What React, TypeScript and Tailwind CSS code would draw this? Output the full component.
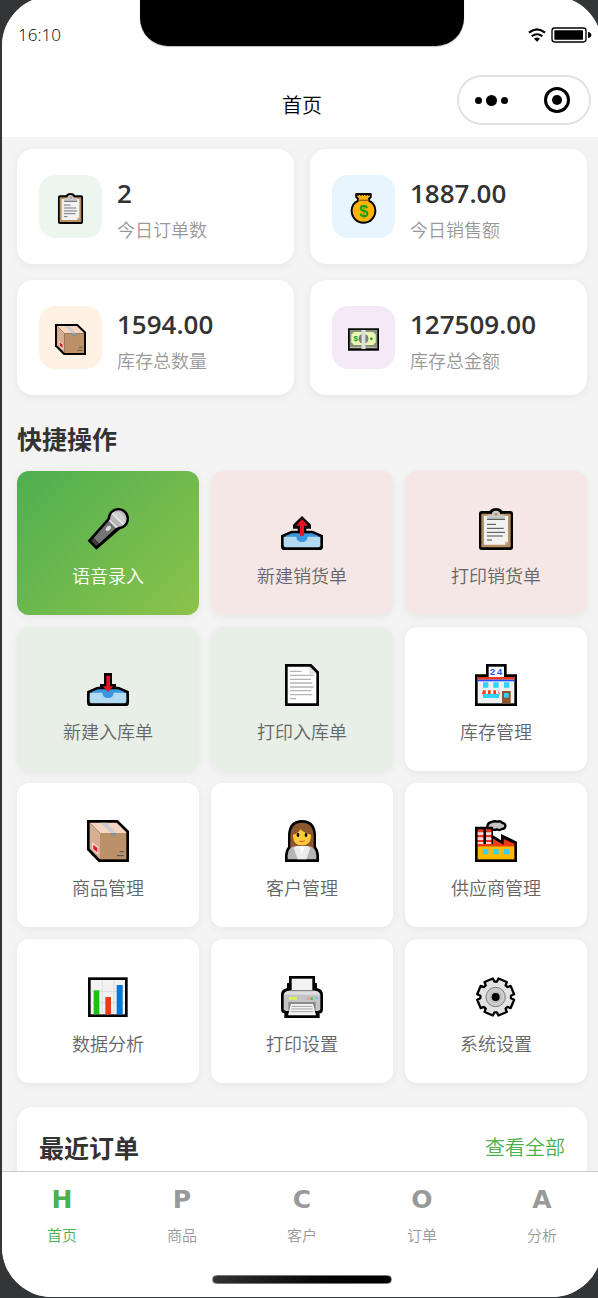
import type { ReactNode } from 'react'
import clsx from 'clsx'

function ClipboardIcon() {
  return (
    <svg viewBox="0 0 126 126" className="w-full h-full" aria-hidden="true">
      <path
        d="M20 9H44Q50 0 63 0Q76 0 82 9H106Q114 9 114 17V118Q114 126 106 126H20Q12 126 12 118V17Q12 9 20 9Z"
        fill="#000"
      />
      <rect x="19" y="17" width="88" height="101" rx="3" fill="#b98f64" />
      <path d="M27 24H99V101L90 110H27Z" fill="#f2f2f2" />
      <path d="M90 110V101H99Z" fill="#d8b896" />
      <path d="M36 36V24Q36 20 42 20H50Q51 8 63 8Q75 8 76 20H84Q90 20 90 24V36Z" fill="#c9c9c9" />
      <circle cx="63" cy="19" r="4" fill="#b98f64" />
      <path d="M36 34H90M36 49H63M36 61H86M36 73H90M36 84H83M36 96H51" stroke="#4a4a4a" strokeWidth="3" />
    </svg>
  )
}

function MoneyBagIcon() {
  return (
    <svg viewBox="0 0 94 94" className="w-full h-full" aria-hidden="true">
      <path
        d="M25 3H69V12L64 17V24C77 30 83 42 83 54A36 36 0 0 1 11 54C11 42 17 30 30 24V17L25 12Z"
        fill="#fdb30a"
        stroke="#000"
        strokeWidth="6"
        strokeLinejoin="round"
      />
      <path d="M31 5V9M39 5V9M47 5V9M55 5V9M63 5V9" stroke="#000" strokeWidth="3" />
      <path d="M31 22H63" stroke="#9a5a16" strokeWidth="4" />
      <text
        x="47"
        y="73"
        textAnchor="middle"
        fontSize="50"
        fontWeight="700"
        fontFamily="Liberation Sans, sans-serif"
        fill="#16a016"
      >
        $
      </text>
    </svg>
  )
}

function BanknoteIcon() {
  return (
    <svg viewBox="0 0 94 94" className="w-full h-full" aria-hidden="true">
      <rect y="13" width="94" height="68" fill="#000" />
      <rect x="5" y="18" width="84" height="52" fill="#87907a" />
      <path d="M5 72H89" stroke="#f2f5da" strokeWidth="3" />
      <path d="M17 24H77Q78 30 84 31V57Q78 58 77 64H17Q16 58 10 57V31Q16 30 17 24Z" fill="#e9f7b4" />
      <circle cx="47" cy="45" r="15" fill="#7c7c7c" />
      <rect x="41" y="18" width="12" height="58" fill="#dedede" />
      <circle cx="71" cy="45" r="4" fill="#16a016" />
      <text
        x="23"
        y="53"
        textAnchor="middle"
        fontSize="24"
        fontWeight="700"
        fontFamily="Liberation Sans, sans-serif"
        fill="#16a016"
      >
        $
      </text>
    </svg>
  )
}

function MicIcon() {
  return (
    <svg viewBox="0 0 126 126" className="w-full h-full" aria-hidden="true">
      <circle cx="94" cy="32" r="32" fill="#000" />
      <path d="M66 26L2 98L28 125L101 62Z" fill="#000" />
      <path d="M67 37L20 90L36 107L90 57Z" fill="#767676" />
      <path d="M20 90L12 98L28 114L36 107Z" fill="#3c3c3c" />
      <path d="M69 32A25 25 0 1 1 95 57Z" fill="#b9b9b9" />
      <path d="M69 32L95 57L86 60L66 39Z" fill="#dcdcdc" />
      <path d="M77 15L111 49A25 25 0 0 0 77 15Z" fill="#cfcfcf" />
      <path d="M76 16L110 50" stroke="#e9e9e9" strokeWidth="5" />
      <ellipse cx="64" cy="61" rx="9" ry="6" transform="rotate(-45 64 61)" fill="#dedede" />
    </svg>
  )
}

function Tray() {
  return (
    <>
      <path d="M0 82L31 68H95L126 82V116Q126 126 116 126H10Q0 126 0 116Z" fill="#000" />
      <path d="M14 83L33 76H93L112 83V94H14Z" fill="#3a96dd" />
      <path d="M8 86H118V112Q118 118 112 118H14Q8 118 8 112Z" fill="#b2daf1" />
      <path d="M46 84H80Q80 102 63 102Q46 102 46 84Z" fill="#3a96dd" />
    </>
  )
}

function OutboxIcon() {
  return (
    <svg viewBox="0 0 126 126" className="w-full h-full" aria-hidden="true">
      <path d="M63 24L90 50V62H76V74H50V62H36V50Z" fill="#000" />
      <Tray />
      <path d="M63 33L81 53H69V83H57V53H45Z" fill="#e81224" />
    </svg>
  )
}

function InboxIcon() {
  return (
    <svg viewBox="0 0 126 126" className="w-full h-full" aria-hidden="true">
      <path d="M51 27H75V60H87V72H39V60H51Z" fill="#000" />
      <Tray />
      <path d="M58 35H69V67H79L63 84L47 67H58Z" fill="#e81224" />
    </svg>
  )
}

function PageIcon() {
  return (
    <svg viewBox="0 0 126 126" className="w-full h-full" aria-hidden="true">
      <path d="M12 0H91L114 23V126H12Z" fill="#000" />
      <path d="M20 8H84V30H106V118H20Z" fill="#fff" />
      <path d="M84 8H87L106 27V30H84Z" fill="#e4e4e4" />
      <path
        d="M27 22H62M27 34H98M27 46H90M27 57H94M27 69H98M27 80H90M27 92H94M27 104H45"
        stroke="#b5b5b5"
        strokeWidth="4"
      />
    </svg>
  )
}

function StoreIcon() {
  return (
    <svg viewBox="0 0 126 126" className="w-full h-full" aria-hidden="true">
      <path d="M33 0H95V31H126V126H0V31H33Z" fill="#000" />
      <path d="M41 8H87V39H41Z" fill="#fff" />
      <rect x="8" y="39" width="110" height="79" fill="#f0f0f0" />
      <rect x="8" y="39" width="110" height="8" fill="#f03a17" />
      <rect x="8" y="47" width="110" height="5" fill="#2353ff" />
      <path d="M24 55H40V71H24ZM55 55H71V71H55ZM87 55H103V71H87Z" fill="#31d2f7" />
      <path d="M24 79H32V91H21ZM39 79H47V91H39ZM55 79H63V91H55ZM69 79L75 91H71Z" fill="#f03a17" />
      <rect x="24" y="90" width="48" height="12" fill="#31d2f7" />
      <rect x="81" y="81" width="26" height="37" fill="#8e562e" />
      <rect x="87" y="87" width="14" height="14" fill="#31d2f7" />
      <g fontSize="28" fontWeight="700" fontFamily="Liberation Sans, sans-serif" textAnchor="middle" fill="#2353ff">
        <text x="53" y="33">
          2
        </text>
        <text x="74" y="33">
          4
        </text>
      </g>
    </svg>
  )
}

function BoxIcon() {
  return (
    <svg viewBox="0 0 126 126" className="w-full h-full" aria-hidden="true">
      <path d="M0 0H92L126 33V126H35L0 90Z" fill="#000" />
      <path d="M8 8H89L118 37V39H39Z" fill="#f5d5c0" />
      <path d="M8 8L39 39V118L8 86Z" fill="#d6ae91" />
      <rect x="39" y="39" width="79" height="79" fill="#ba9168" />
      <path d="M40 8H57L87 39H71Z" fill="#c9ccd0" />
      <rect x="71" y="39" width="16" height="9" fill="#8b9093" />
      <path d="M15 66L34 82V104L15 88Z" fill="#f3d9cf" />
      <path d="M19 74L31 84V97L19 87Z" fill="#e81224" />
      <path d="M98 95H111M90 107H111" stroke="#554a40" strokeWidth="3" />
    </svg>
  )
}

function OfficeWorkerIcon() {
  return (
    <svg viewBox="0 0 126 126" className="w-full h-full" aria-hidden="true">
      <path d="M12 126V104Q12 90 21 80V43Q24 0 63 0Q102 0 105 43V80Q114 90 114 104V126Z" fill="#000" />
      <path d="M28 84V46Q30 8 63 8Q96 8 98 46V84Z" fill="#8e562e" />
      <path d="M20 118V106Q20 80 46 78H80Q106 80 106 106V118Z" fill="#b5b5b5" />
      <path d="M46 78H80L88 84L76 118H50L38 84Z" fill="#ececec" />
      <path d="M55 78H71L63 104Z" fill="#fff" />
      <path d="M36 44Q52 42 58 28Q70 40 90 44V50Q88 76 63 76Q38 76 36 50Z" fill="#ffc83d" />
      <ellipse cx="51" cy="45" rx="4" ry="6" fill="#000" />
      <ellipse cx="75" cy="45" rx="4" ry="6" fill="#000" />
      <path d="M55 62Q63 68 71 62" stroke="#e8662c" strokeWidth="4" fill="none" />
    </svg>
  )
}

function FactoryIcon() {
  return (
    <svg viewBox="0 0 126 126" className="w-full h-full" aria-hidden="true">
      <path
        d="M36 26Q36 8 50 6Q58 2 68 5Q76 1 82 9Q92 10 91 19Q90 27 80 27Q74 33 66 28Q56 32 50 26Z"
        fill="#c4c4c4"
        stroke="#000"
        strokeWidth="7"
        strokeLinejoin="round"
      />
      <path d="M0 20H54V46L78 61V42L126 65V126H0Z" fill="#000" />
      <path d="M8 28H25V78H8ZM33 28H49V78H33Z" fill="#f03a17" />
      <path d="M8 37H25V45H8ZM8 52H25V60H8ZM33 37H49V45H33ZM33 52H49V60H33ZM8 66H25V72H8ZM33 66H49V72H33Z" fill="#f4dcdc" />
      <path d="M54 56L86 74V57L118 71V80H8V72H54Z" fill="#f03a17" />
      <rect x="8" y="79" width="110" height="39" fill="#ffb900" />
      <path d="M24 87H40V103H24ZM55 87H71V103H55ZM87 87H103V103H87Z" fill="#31d2f7" />
    </svg>
  )
}

function ChartIcon() {
  return (
    <svg viewBox="0 0 126 126" className="w-full h-full" aria-hidden="true">
      <rect x="3" y="4" width="119" height="119" fill="#000" />
      <rect x="11" y="12" width="103" height="103" fill="#f2f2f2" />
      <path d="M46 12V115M81 12V115M11 46H114M11 80H114" stroke="#dcdcdc" strokeWidth="3" />
      <rect x="20" y="43" width="17" height="72" fill="#16c60c" />
      <rect x="55" y="63" width="17" height="52" fill="#f03a17" />
      <rect x="89" y="27" width="18" height="88" fill="#0078d7" />
    </svg>
  )
}

function PrinterIcon() {
  return (
    <svg viewBox="0 0 126 126" className="w-full h-full" aria-hidden="true">
      <path
        d="M24 0H102V20L108 22V36Q126 40 126 56V98Q126 112 116 112V126H10V112Q0 110 0 98V56Q0 40 18 36V22L24 20Z"
        fill="#000"
      />
      <path d="M32 8H94V44H32Z" fill="#f2f2f2" />
      <path d="M24 44H102Q118 46 118 58V97Q118 105 110 105H16Q8 105 8 97V58Q8 46 24 44Z" fill="#c4c4c4" />
      <path d="M26 44H100Q114 46 116 56H10Q12 46 26 44Z" fill="#dedede" />
      <path d="M28 44H98" stroke="#777" strokeWidth="3" />
      <rect x="24" y="63" width="24" height="8" fill="#dff254" />
      <circle cx="81" cy="68" r="4" fill="#f19a90" />
      <circle cx="92" cy="68" r="4" fill="#4cb944" />
      <circle cx="106" cy="66" r="4" fill="#78bff0" />
      <path d="M22 78H104V105H22Z" fill="#8a8a8a" />
      <path d="M30 84H96L105 118H21Z" fill="#f4f4f4" />
      <path d="M33 91H94M31 99H95M29 107H97" stroke="#a3a3a3" strokeWidth="3" />
    </svg>
  )
}

// eight teeth, with a gap on each axis and diagonal
const gearPoints = Array.from({ length: 8 }, (_, i) => 22.5 + i * 45)
  .flatMap((angle) => [
    [angle - 18, 46],
    [angle - 14, 56],
    [angle + 14, 56],
    [angle + 18, 46],
  ])
  .map(([angle, r]) => {
    const rad = (angle * Math.PI) / 180
    return `${(62 + r * Math.cos(rad)).toFixed(1)},${(63 + r * Math.sin(rad)).toFixed(1)}`
  })
  .join(' ')

function GearIcon() {
  return (
    <svg viewBox="0 0 126 126" className="w-full h-full" aria-hidden="true">
      <polygon points={gearPoints} fill="#e3e3e3" stroke="#000" strokeWidth="7" strokeLinejoin="round" />
      <circle cx="62" cy="63" r="29" fill="#cdcdcd" stroke="#7a7a7a" strokeWidth="3" />
      <circle cx="62" cy="63" r="18" fill="#bdbdbd" />
      <circle cx="62" cy="63" r="12" fill="#000" />
    </svg>
  )
}

interface Stat {
  value: string
  label: string
  icon: ReactNode
  color: string
}

const stats: Stat[] = [
  { value: '2', label: '今日订单数', icon: <ClipboardIcon />, color: 'bg-[#edf6ee]' },
  { value: '1887.00', label: '今日销售额', icon: <MoneyBagIcon />, color: 'bg-[#e8f4fe]' },
  { value: '1594.00', label: '库存总数量', icon: <BoxIcon />, color: 'bg-[#fff2e5]' },
  { value: '127509.00', label: '库存总金额', icon: <BanknoteIcon />, color: 'bg-[#f4e9f6]' },
]

interface Action {
  label: string
  icon: ReactNode
  color: string
}

const actions: Action[] = [
  {
    label: '语音录入',
    icon: <MicIcon />,
    color: 'bg-linear-135 from-[#4caf50] to-[#8bc34a] text-white',
  },
  { label: '新建销货单', icon: <OutboxIcon />, color: 'bg-[#f5e7e6] text-[#666]' },
  { label: '打印销货单', icon: <ClipboardIcon />, color: 'bg-[#f5e7e6] text-[#666]' },
  { label: '新建入库单', icon: <InboxIcon />, color: 'bg-[#e8efe7] text-[#666]' },
  { label: '打印入库单', icon: <PageIcon />, color: 'bg-[#e8efe7] text-[#666]' },
  { label: '库存管理', icon: <StoreIcon />, color: 'bg-white text-[#666]' },
  { label: '商品管理', icon: <BoxIcon />, color: 'bg-white text-[#666]' },
  { label: '客户管理', icon: <OfficeWorkerIcon />, color: 'bg-white text-[#666]' },
  { label: '供应商管理', icon: <FactoryIcon />, color: 'bg-white text-[#666]' },
  { label: '数据分析', icon: <ChartIcon />, color: 'bg-white text-[#666]' },
  { label: '打印设置', icon: <PrinterIcon />, color: 'bg-white text-[#666]' },
  { label: '系统设置', icon: <GearIcon />, color: 'bg-white text-[#666]' },
]

const tabs = [
  { letter: 'H', label: '首页', active: true },
  { letter: 'P', label: '商品', active: false },
  { letter: 'C', label: '客户', active: false },
  { letter: 'O', label: '订单', active: false },
  { letter: 'A', label: '分析', active: false },
]

function StatusBar() {
  return (
    <div className="relative flex items-center justify-between h-[78px] pl-4 pr-[10px]">
      <span className="text-[17px] leading-6 text-black font-[350]">16:10</span>
      <div className="absolute top-0 left-1/2 -translate-x-1/2 w-[54%] h-[50px] rounded-b-[28px] bg-black shadow-[0_1px_1px_#bbb]" />
      <div className="flex items-center gap-[5px]">
        <svg viewBox="0 0 54 42" className="w-[18px] h-[14px]" aria-hidden="true">
          <path d="M3 14Q27 -6 51 14" stroke="#000" strokeWidth="7" fill="none" />
          <path d="M11 25Q27 12 43 25" stroke="#000" strokeWidth="6" fill="none" />
          <path d="M18 32Q27 25 36 32L27 41Z" fill="#000" />
        </svg>
        <svg viewBox="0 0 123 48" className="w-[41px] h-4" aria-hidden="true">
          <rect x="3" y="3" width="102" height="42" rx="8" fill="none" stroke="#000" strokeWidth="4" />
          <rect x="10" y="10" width="86" height="28" rx="2" fill="#000" />
          <path d="M111 15Q121 16 121 24Q121 32 111 33Z" fill="#000" />
        </svg>
      </div>
    </div>
  )
}

function TitleBar() {
  return (
    <div className="grid grid-cols-[1fr_auto_1fr] items-start px-[11px] pt-px pb-3">
      <span />
      <h1 className="pt-[21px] text-xl leading-5 font-[350] text-black">首页</h1>
      <div className="flex justify-self-end items-center w-[134px] h-[50px] rounded-full border-2 border-[#e2e2e2]">
        <button type="button" aria-label="更多" className="flex flex-1 items-center justify-center gap-1">
          <span className="w-[7px] h-[7px] rounded-full bg-black" />
          <span className="w-[11px] h-[11px] rounded-full bg-black" />
          <span className="w-[7px] h-[7px] rounded-full bg-black" />
        </button>
        <button type="button" aria-label="关闭" className="flex flex-1 items-center justify-center">
          <span className="flex items-center justify-center w-[26px] h-[26px] rounded-full border-3 border-black">
            <span className="w-[10px] h-[10px] rounded-full bg-black" />
          </span>
        </button>
      </div>
    </div>
  )
}

function StatCard({ stat }: { stat: Stat }) {
  return (
    <div className="flex items-center gap-[15px] h-[115px] px-[22px] rounded-2xl bg-white shadow-[0_2px_10px_rgba(0,0,0,0.06)]">
      <div className={clsx('flex items-center justify-center w-[63px] h-[63px] pt-[3px] rounded-2xl', stat.color)}>
        <div className="w-[31px] h-[31px]">{stat.icon}</div>
      </div>
      <div className="pt-2">
        <p className="text-[26px] leading-[38px] font-semibold text-[#333]">{stat.value}</p>
        <p className="text-[18px] leading-9 font-[350] text-[#999]">{stat.label}</p>
      </div>
    </div>
  )
}

function ActionTile({ action }: { action: Action }) {
  return (
    <button
      type="button"
      className={clsx(
        'flex flex-col items-center h-36 pt-[37px] rounded-xl shadow-[0_2px_10px_rgba(0,0,0,0.06)]',
        action.color
      )}
    >
      <span className="w-[42px] h-[42px]">{action.icon}</span>
      <span className="mt-[14px] text-[18px] leading-6 font-[350]">{action.label}</span>
    </button>
  )
}

function TabBar() {
  return (
    <div className="bg-white border-t border-[#ccc] pb-[13px]">
      <nav className="grid grid-cols-5">
        {tabs.map((tab) => (
          <a
            key={tab.letter}
            href="#"
            aria-current={tab.active ? 'page' : undefined}
            className={clsx(
              'flex flex-col items-center gap-[11px] pt-[14px]',
              tab.active ? 'text-[#4caf50]' : 'text-[#999]'
            )}
          >
            <span className="font-['DejaVu_Sans',sans-serif] text-[25px] leading-7 font-bold">{tab.letter}</span>
            <span className="text-[15px] leading-5 font-[350]">{tab.label}</span>
          </a>
        ))}
      </nav>
      <div className="mx-auto mt-[30px] w-[30%] h-[9px] rounded-full border border-[#777] bg-linear-to-r from-[#333] to-black" />
    </div>
  )
}

export default function App() {
  return (
    <div className="flex flex-col h-screen overflow-hidden bg-[#343536] font-['Open_Sans','Noto_Sans_CJK_SC',sans-serif]">
      <div className="flex flex-col flex-1 min-h-0 -mt-1 mb-px ml-0.5 -mr-1 rounded-[50px] overflow-hidden bg-[#f4f4f4]">
        <header className="bg-white">
          <StatusBar />
          <TitleBar />
        </header>

        <main className="flex-1 min-h-0 overflow-y-auto [scrollbar-width:none] px-[15px] pt-3">
          <div className="grid grid-cols-2 gap-4">
            {stats.map((stat) => (
              <StatCard key={stat.label} stat={stat} />
            ))}
          </div>

          <h2 className="mt-7 mb-4 text-[25px] leading-8 font-bold text-[#333]">快捷操作</h2>
          <div className="grid grid-cols-3 gap-3">
            {actions.map((action) => (
              <ActionTile key={action.label} action={action} />
            ))}
          </div>

          <section className="mt-6 px-[22px] py-[25px] rounded-2xl bg-white shadow-[0_2px_10px_rgba(0,0,0,0.06)]">
            <div className="flex items-center justify-between">
              <h2 className="text-[25px] leading-8 font-bold text-[#333]">最近订单</h2>
              <a href="#" className="text-xl leading-8 font-[350] text-[#4caf50]">
                查看全部
              </a>
            </div>
          </section>
        </main>

        <TabBar />
      </div>
    </div>
  )
}
